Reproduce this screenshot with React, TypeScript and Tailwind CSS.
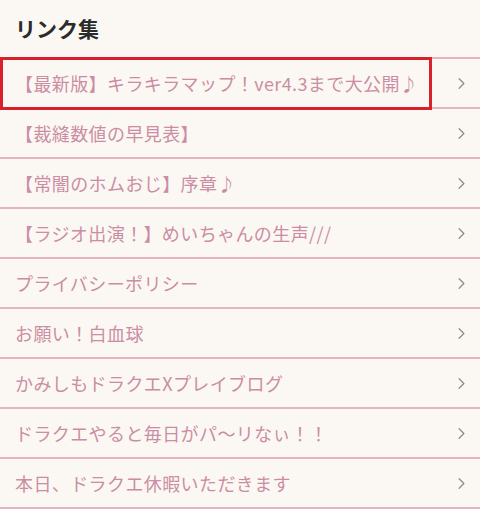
import { ChevronRight } from 'lucide-react';

const links = [
  '【最新版】キラキラマップ！ver4.3まで大公開♪',
  '【裁縫数値の早見表】',
  '【常闇のホムおじ】序章♪',
  '【ラジオ出演！】めいちゃんの生声///',
  'プライバシーポリシー',
  'お願い！白血球',
  'かみしもドラクエXプレイブログ',
  'ドラクエやると毎日がパ〜リなぃ！！',
  '本日、ドラクエ休暇いただきます',
];

export default function App() {
  return (
    <div
      className="w-[480px] h-[509px] overflow-hidden bg-[#fbf8f3]"
      style={{ fontFamily: '"Noto Sans CJK JP", "Noto Sans", sans-serif' }}
    >
      <h2 className="h-[57px] pl-[15px] pt-[12px] text-[21px] font-bold leading-[32px] text-[#2b2b2b]">
        リンク集
      </h2>
      <ul className="border-t-2 border-solid border-t-[#e3b4c4]">
        {links.map((text, i) => (
          <li key={i} className="relative h-[50px] border-b-2 border-solid border-b-[#e3b4c4]">
            <a href="#" className="flex h-full items-center justify-between pl-[15px] pr-[9px]">
              <span className="text-[18px] tracking-[0.4px] text-[#cb8da3]">{text}</span>
              <ChevronRight className="h-[19px] w-[19px] text-[#8a8a8a]" strokeWidth={1.5} />
            </a>
            {i === 0 && (
              <div className="pointer-events-none absolute left-0 top-[-2px] h-[53px] w-[432px] border-[3px] border-[#d8212b]" />
            )}
          </li>
        ))}
      </ul>
    </div>
  );
}
